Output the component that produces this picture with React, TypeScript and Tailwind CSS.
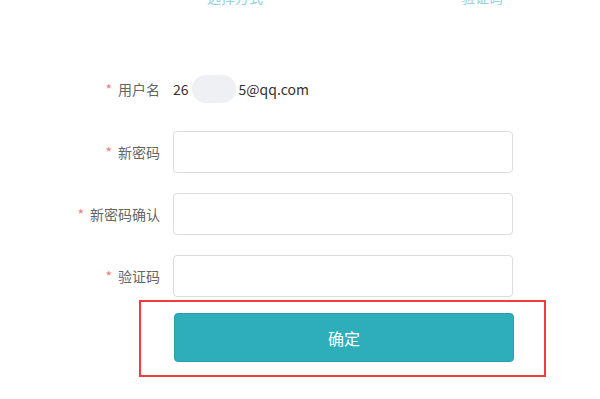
import React from "react";

const font = { fontFamily: '"Noto Sans CJK SC", "Noto Sans", sans-serif' };

type FieldProps = { label: string; className?: string };

// one labelled row of the reset form
function Field({ label, className = "" }: FieldProps) {
  return (
    <div className={`flex items-center ${className}`}>
      <label className="w-[160px] shrink-0 text-right text-[14px] text-[#666]">
        <span className="mr-[6px] text-[#f07c7c]">*</span>
        {label}
      </label>
      <input
        type="text"
        className="ml-[13px] h-[42px] w-[340px] rounded-[4px] border border-[#dcdcdc] bg-white px-3 text-[14px] outline-none"
      />
    </div>
  );
}

export default function App() {
  return (
    <div className="h-[399px] w-[600px] overflow-hidden bg-white" style={font}>
      {/* step titles, scrolled almost out of view */}
      <div className="flex h-[5px] overflow-hidden pl-[207px] text-[14px] leading-[14px] text-[#8fd3dc]">
        <span className="-mt-[10px]">选择方式</span>
        <span className="-mt-[10px] ml-[198px]">验证码</span>
      </div>

      <div className="mt-[73px] flex h-[22px] items-center">
        <label className="w-[160px] shrink-0 text-right text-[14px] text-[#666]">
          <span className="mr-[6px] text-[#f07c7c]">*</span>
          用户名
        </label>
        <div className="ml-[13px] flex items-center text-[14px] text-[#333]">
          <span>26</span>
          <span className="mx-[3px] inline-block h-[28px] w-[44px] rounded-[14px] bg-[#eef0f3]" />
          <span>5@qq.com</span>
        </div>
      </div>

      <Field label="新密码" className="mt-[31px]" />
      <Field label="新密码确认" className="mt-[20px]" />
      <Field label="验证码" className="mt-[20px]" />

      <div className="ml-[139px] mt-[3px] h-[77px] w-[407px] border-2 border-[#f43b3b] pl-[33px] pt-[11px]">
        <button
          type="button"
          className="h-[49px] w-[340px] rounded-[4px] border border-[#2a9ea9] bg-[#2eaebb] text-[16px] text-white"
        >
          确定
        </button>
      </div>
    </div>
  );
}
